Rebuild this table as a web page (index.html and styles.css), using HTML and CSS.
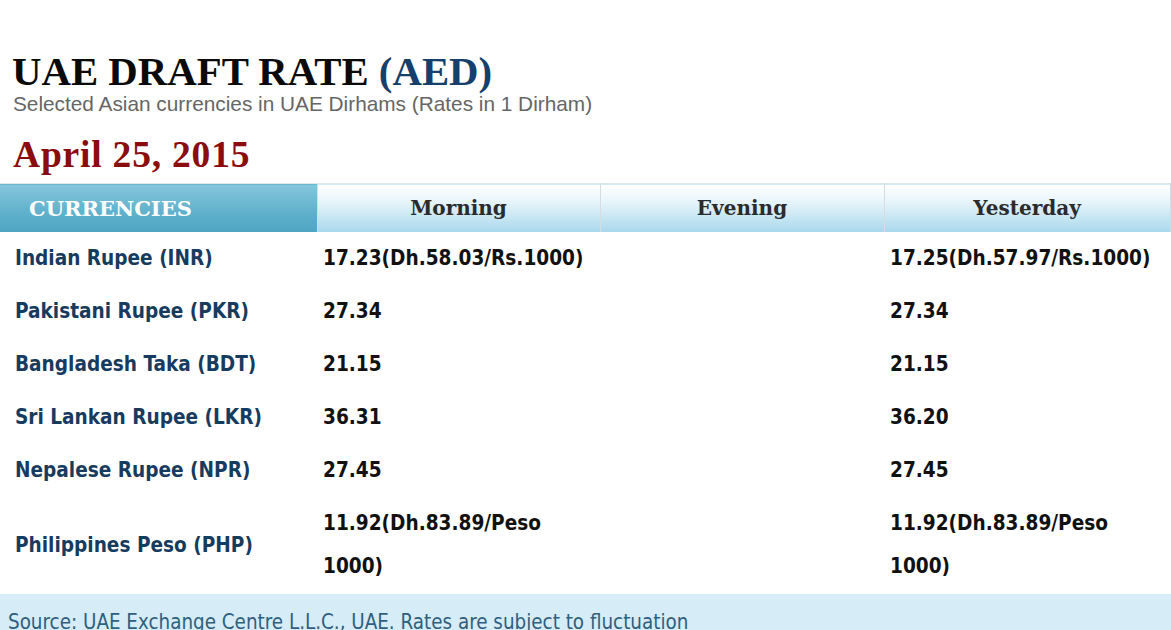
FILE: index.html
```html
<!DOCTYPE html>
<html>
<head>
<meta charset="utf-8">
<link rel="stylesheet" href="styles.css">
</head>
<body>
<div class="page">
  <header class="intro">
    <h1 class="title">UAE DRAFT RATE <span class="title-code">(AED)</span></h1>
    <p class="subtitle">Selected Asian currencies in UAE Dirhams (Rates in 1 Dirham)</p>
    <h2 class="date">April 25, 2015</h2>
  </header>
  <table class="rates">
    <colgroup>
      <col class="c1"><col class="c2"><col class="c3"><col class="c4">
    </colgroup>
    <thead>
      <tr>
        <th class="th-main">CURRENCIES</th>
        <th class="th-sub">Morning</th>
        <th class="th-sub">Evening</th>
        <th class="th-sub">Yesterday</th>
      </tr>
    </thead>
    <tbody>
      <tr><td class="name">Indian Rupee (INR)</td><td class="val">17.23(Dh.58.03/Rs.1000)</td><td class="val"></td><td class="val">17.25(Dh.57.97/Rs.1000)</td></tr>
      <tr><td class="name">Pakistani Rupee (PKR)</td><td class="val">27.34</td><td class="val"></td><td class="val">27.34</td></tr>
      <tr><td class="name">Bangladesh Taka (BDT)</td><td class="val">21.15</td><td class="val"></td><td class="val">21.15</td></tr>
      <tr><td class="name">Sri Lankan Rupee (LKR)</td><td class="val">36.31</td><td class="val"></td><td class="val">36.20</td></tr>
      <tr><td class="name">Nepalese Rupee (NPR)</td><td class="val">27.45</td><td class="val"></td><td class="val">27.45</td></tr>
      <tr><td class="name">Philippines Peso (PHP)</td><td class="val"><span class="wrap">11.92(Dh.83.89/Peso 1000)</span></td><td class="val"></td><td class="val"><span class="wrap">11.92(Dh.83.89/Peso 1000)</span></td></tr>
    </tbody>
  </table>
  <footer class="source">Source: UAE Exchange Centre L.L.C., UAE. Rates are subject to fluctuation</footer>
</div>
</body>
</html>
```

FILE: styles.css
```css
html, body {
  margin: 0;
  padding: 0;
  background: #ffffff;
}

.page {
  width: 1171px;
}

.intro {
  padding: 50px 0 0 12px;
}

.title {
  margin: 0;
  font-family: "Liberation Serif", "Times New Roman", serif;
  font-weight: bold;
  font-size: 40.8px;
  line-height: 43px;
  color: #0a0a0a;
}

.title-code {
  color: #163f6b;
}

.subtitle {
  margin: 0;
  padding-left: 1px;
  font-family: "Liberation Sans", Arial, sans-serif;
  font-size: 20.8px;
  line-height: 22px;
  color: #666666;
}

.date {
  margin: 0;
  padding: 18px 0 0 1px;
  font-family: "Liberation Serif", "Times New Roman", serif;
  font-weight: bold;
  font-size: 37.5px;
  line-height: 44px;
  letter-spacing: 0.8px;
  color: #8a0c0c;
}

.rates {
  margin-top: 6px;
  width: 1170px;
  border-collapse: collapse;
  table-layout: fixed;
}

.c1 { width: 317px; }
.c2 { width: 283px; }
.c3 { width: 284px; }
.c4 { width: 286px; }

.rates th {
  height: 48px;
  padding: 0;
  font-family: "DejaVu Serif", Georgia, serif;
  font-weight: bold;
  font-size: 20px;
  border-top: 1px solid #dfe6ea;
}

.th-main {
  text-align: left;
  padding-left: 29px !important;
  color: #ffffff;
  font-size: 21px !important;
  letter-spacing: 0;
  background: linear-gradient(#86c6dc, #5fb0cb 60%, #4ea5c3);
}

.th-sub {
  text-align: center;
  color: #2b2b2b;
  background: linear-gradient(#ffffff, #e4f3fa 40%, #a8d7ec);
  border-left: 1px solid #d5dde2;
  border-right: 1px solid #d5dde2;
}

.rates td {
  padding: 5px 0 5px 6px;
  font-family: "DejaVu Sans Condensed", Tahoma, sans-serif;
  font-weight: bold;
  font-size: 20.6px;
  line-height: 43px;
  vertical-align: middle;
}

.rates td.name {
  padding-left: 15px;
  color: #173b5e;
}

.rates td.val {
  color: #111111;
}

.wrap {
  display: block;
  width: 240px;
}

.source {
  margin-top: 1px;
  height: 37px;
  padding: 17px 0 0 8px;
  box-sizing: border-box;
  background: #d6ecf6;
  font-family: "DejaVu Sans Condensed", Tahoma, sans-serif;
  font-size: 20.4px;
  line-height: 22px;
  color: #2f6080;
}
```
